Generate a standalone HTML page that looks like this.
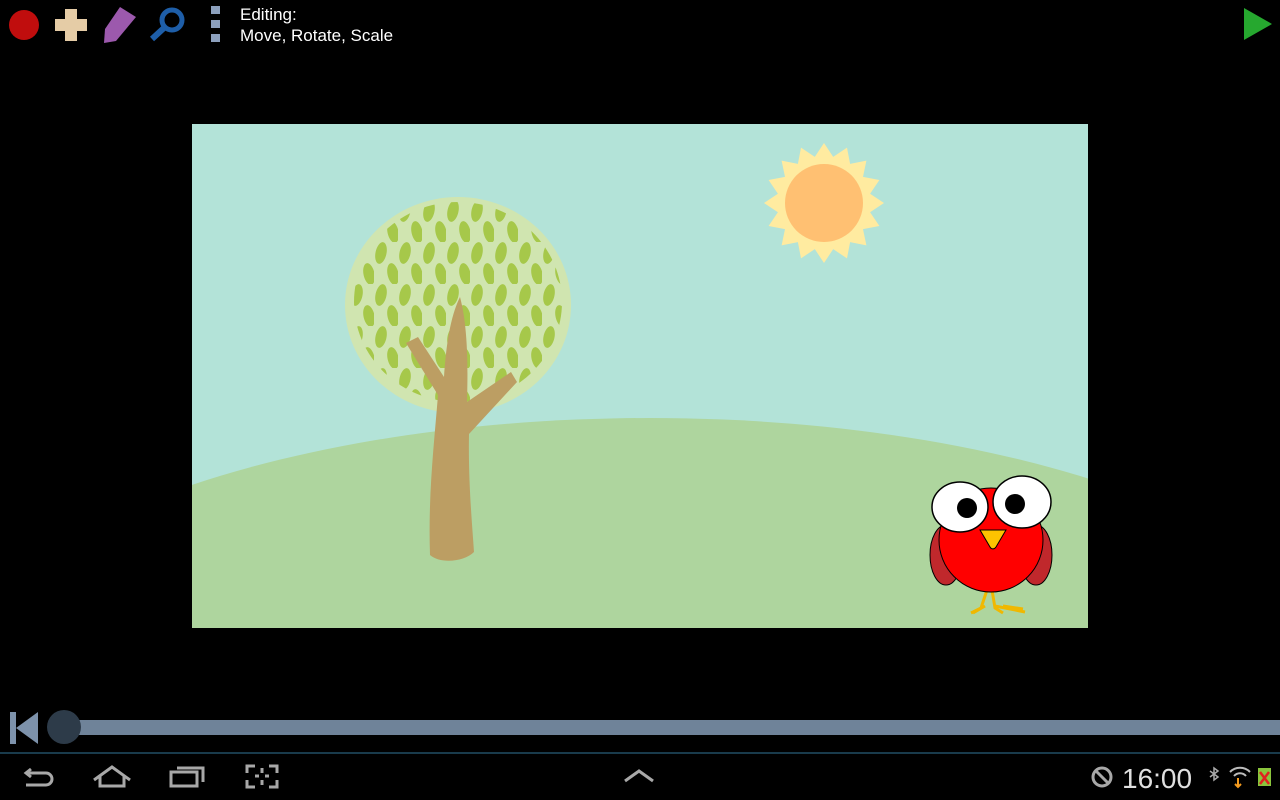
<!DOCTYPE html>
<html><head><meta charset="utf-8"><style>
html,body{margin:0;padding:0;background:#000;width:1280px;height:800px;overflow:hidden;font-family:"Liberation Sans",sans-serif}
.t{position:absolute;left:240px;top:4px;color:#fff;font-size:17px;line-height:21px}
svg{display:block}
</style></head><body>
<svg width="1280" height="800" style="position:absolute;left:0;top:0">
<defs>
<pattern id="lv" width="24" height="42" patternUnits="userSpaceOnUse" x="446" y="200">
<ellipse cx="7" cy="11" rx="5.5" ry="11" fill="#a6c84a" transform="rotate(12 7 11)"/>
<ellipse cx="19" cy="32" rx="5.5" ry="11" fill="#a6c84a" transform="rotate(-12 19 32)"/>
</pattern>
<clipPath id="cv"><rect x="192" y="124" width="896" height="504"/></clipPath>
</defs>
<circle cx="24" cy="25" r="15" fill="#c00d0d"/>
<path d="M65 9h12v10h10v12h-10v10h-12v-10h-10v-12h10z" fill="#e5cca6"/>
<path d="M120 7l16 10-20 24-12 2 1-14z" fill="#9c59ad"/>
<circle cx="172" cy="20" r="10" fill="none" stroke="#1e5ea8" stroke-width="5"/>
<path d="M165 27l-13 12" stroke="#1e5ea8" stroke-width="6"/>
<rect x="211" y="6" width="9" height="8" fill="#8ca0bd"/>
<rect x="211" y="20" width="9" height="8" fill="#8ca0bd"/>
<rect x="211" y="34" width="9" height="8" fill="#8ca0bd"/>
<path d="M1244 8l28 16-28 16z" fill="#26a82f"/>
<g clip-path="url(#cv)">
<rect x="192" y="124" width="896" height="504" fill="#b3e3d8"/>
<ellipse cx="650" cy="711" rx="720" ry="293" fill="#aed59e"/>
<polygon points="884,203 870.1,212.2 879.4,226 863,229.1 866.4,245.4 850.1,242.1 847,258.4 833.2,249.1 824,263 814.8,249.1 801,258.4 797.9,242.1 781.6,245.4 785,229.1 768.6,226 777.9,212.2 764,203 777.9,193.8 768.6,180 785,176.9 781.6,160.6 797.9,163.9 801,147.6 814.8,156.9 824,143 833.2,156.9 847,147.6 850.1,163.9 866.4,160.6 863,176.9 879.4,180 870.1,193.8" fill="#ffeba0"/>
<circle cx="824" cy="203" r="39" fill="#ffc072"/>
<ellipse cx="458" cy="305" rx="113" ry="108" fill="#d0e5b0"/>
<ellipse cx="458" cy="302" rx="104" ry="100" fill="url(#lv)"/>
<path d="M430 555c-2-60 4-110 8-160l-32-52 12-6 26 40c2-30 6-60 16-80 8 30 8 70 7 105l44-30 6 10-48 52c-1 50 4 100 5 118-10 10-34 12-44 3z" fill="#bc9e63"/>
<ellipse cx="946" cy="555" rx="16" ry="30" fill="#c0282c" stroke="#000" stroke-width="1"/>
<ellipse cx="1036" cy="555" rx="16" ry="30" fill="#c0282c" stroke="#000" stroke-width="1"/>
<path d="M987 590l-6 18-10 5M992 590l3 18 8 5M985 606l-12 7M995 606l30 6M1003 606l20 3" stroke="#f0b800" stroke-width="3" fill="none"/>
<circle cx="991" cy="540" r="52" fill="#f00" stroke="#000" stroke-width="1"/>
<ellipse cx="960" cy="507" rx="28" ry="25" fill="#fff" stroke="#000" stroke-width="1.5"/>
<ellipse cx="1022" cy="502" rx="29" ry="26" fill="#fff" stroke="#000" stroke-width="1.5"/>
<circle cx="967" cy="508" r="10" fill="#000"/>
<circle cx="1015" cy="504" r="10" fill="#000"/>
<path d="M980 530h26l-10 17c-2 3-5 2-6 0z" fill="#fdc300" stroke="#000" stroke-width="1"/>
</g>
<rect x="10" y="712" width="6" height="32" fill="#7d92ab"/>
<path d="M16 728l22-16v32z" fill="#7d92ab"/>
<rect x="64" y="720" width="1216" height="15" fill="#6f8399"/>
<circle cx="64" cy="727" r="17" fill="#2d3b49"/>
<rect x="0" y="752" width="1280" height="2" fill="#193b4c"/>
<g fill="none" stroke="#a8a8a8" stroke-width="3">
<path d="M31 769l-5 4 5 4M26 773h20a6 6 0 0 1 0 12h-20"/>
<path d="M94 780l18-13 18 13M100 776v10h24v-10"/>
<rect x="171" y="772" width="26" height="14"/><path d="M177 768h26v14"/>
<path d="M247 773v-7h8M269 766h8v7M277 780v7h-8M255 787h-8v-7M262 768v5M262 780v5M255 776h4M265 776h4"/>
<path d="M625 781l14-10 14 10"/>
<circle cx="1102" cy="777" r="9"/><path d="M1096 771l12 12"/>
</g>
<text x="1122" y="788" fill="#e0e0e0" font-size="28" font-family="Liberation Sans">16:00</text>
<path d="M1210 771l8 6-4 3v-12l4 3-8 6" stroke="#aaa" stroke-width="1.5" fill="none"/>
<path d="M1230 772a14 14 0 0 1 20 0M1234 776a8 8 0 0 1 12 0" stroke="#bbb" stroke-width="2" fill="none"/>
<path d="M1238 778v9M1235 784l3 3 3-3" stroke="#f39a1e" stroke-width="2" fill="none"/>
<rect x="1258" y="768" width="13" height="18" fill="#8ac43c"/>
<path d="M1260 772l9 12M1269 772l-9 12" stroke="#e02020" stroke-width="2.5"/>
</svg>
<div class="t">Editing:<br>Move, Rotate, Scale</div>
</body></html>
